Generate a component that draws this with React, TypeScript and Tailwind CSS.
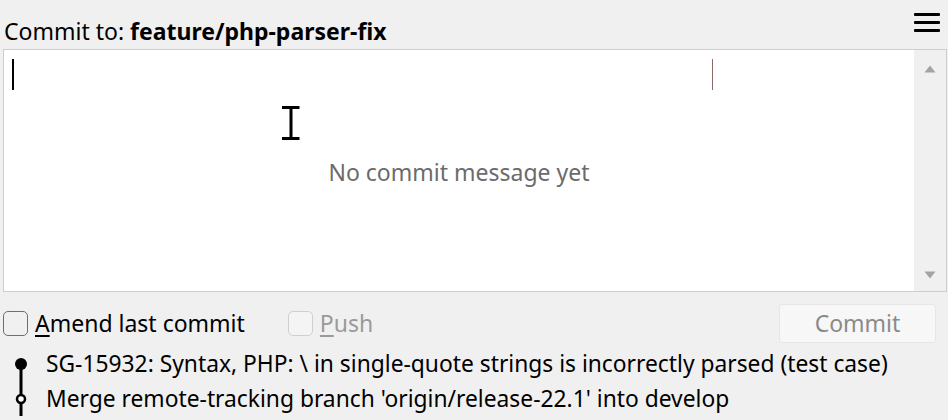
import React from 'react';

const font = { fontFamily: '"Noto Sans", "Open Sans", sans-serif' };

function Hamburger() {
  return (
    <svg width="26" height="20" viewBox="0 0 26 20" className="block">
      <rect x="0" y="1" width="26" height="3" rx="1" fill="#000" />
      <rect x="0" y="9" width="26" height="3" rx="1" fill="#000" />
      <rect x="0" y="17" width="26" height="3" rx="1" fill="#000" />
    </svg>
  );
}

function Checkbox({ disabled }: { disabled?: boolean }) {
  return (
    <span
      className={
        'inline-block w-[25px] h-[25px] rounded-[5px] border-[1.5px] ' +
        (disabled ? 'border-[#cfcfcf] bg-[#f4f4f4]' : 'border-[#6e6e6e] bg-[#f0f0f0]')
      }
    />
  );
}

const commits = [
  { text: "SG-15932: Syntax, PHP: \\ in single-quote strings is incorrectly parsed (test case)", head: true },
  { text: "Merge remote-tracking branch 'origin/release-22.1' into develop", head: false },
];

export default function App() {
  return (
    <div className="w-[948px] h-[420px] bg-[#f0f0f0] overflow-hidden flex flex-col text-black" style={font}>
      {/* Header */}
      <div className="h-[49px] flex items-end justify-between pl-[4px] pr-[8px] pb-[3px]">
        <div className="text-[23px] leading-[30px]">
          Commit to: <span className="font-bold">feature/php-parser-fix</span>
        </div>
        <div className="self-start mt-[12px]">
          <Hamburger />
        </div>
      </div>

      {/* Message box */}
      <div className="ml-[3px] mr-[1px] h-[243px] border border-[#cdcdcd] bg-white flex">
        <div className="flex-1 relative flex items-center justify-center">
          <div className="absolute left-[8px] top-[9px] w-[2px] h-[31px] bg-black" />
          <div className="absolute left-[708px] top-[9px] w-px h-[31px] bg-[#8a6a6a]" />
          {/* mouse I-beam */}
          <svg className="absolute left-[277px] top-[56px]" width="20" height="34" viewBox="0 0 20 34">
            <path d="M1 1.5h5.5M13 1.5h5.5M1 32.5h5.5M13 32.5h5.5M6 1.5h7M6 32.5h7" stroke="#000" strokeWidth="3" />
            <rect x="8.5" y="2" width="3" height="30" fill="#000" />
          </svg>
          <span className="text-[23px] text-[#6b6b6b] mt-[3px]">No commit message yet</span>
        </div>
        <div className="w-[32px] bg-[#f0f0f0] flex flex-col items-center justify-between pt-[15px] pb-[12px]">
          <svg width="12" height="8" viewBox="0 0 12 8">
            <path d="M6 0.5L11.5 7.5H0.5Z" fill="#a3a3a3" />
          </svg>
          <svg width="12" height="8" viewBox="0 0 12 8">
            <path d="M0.5 0.5H11.5L6 7.5Z" fill="#a3a3a3" />
          </svg>
        </div>
      </div>

      {/* Options row */}
      <div className="h-[54px] pt-[8px] flex items-center pl-[3px] pr-[12px]">
        <label className="flex items-center gap-[7px]">
          <Checkbox />
          <span className="text-[23px] leading-[30px]">
            <span className="underline underline-offset-[3px]">A</span>mend last commit
          </span>
        </label>
        <label className="flex items-center gap-[7px] ml-[43px]">
          <Checkbox disabled />
          <span className="text-[23px] leading-[30px] text-[#9a9a9a]">
            <span className="underline underline-offset-[3px]">P</span>ush
          </span>
        </label>
        <button className="ml-auto w-[157px] h-[39px] rounded-[3px] border border-[#e6e6e6] bg-[#f7f7f7] text-[23px] leading-[30px] text-[#8a8a8a]">
          Commit
        </button>
      </div>

      {/* Log */}
      <div className="flex flex-col">
        {commits.map((c, i) => (
          <div key={i} className="h-[35px] flex items-center">
            <svg className="ml-[13px] shrink-0" width="16" height="35" viewBox="0 0 16 35">
              {c.head ? (
                <>
                  <line x1="8" y1="18" x2="8" y2="35" stroke="#000" strokeWidth="3" />
                  <circle cx="8" cy="18" r="6" fill="#000" />
                </>
              ) : (
                <>
                  <line x1="8" y1="0" x2="8" y2="35" stroke="#000" strokeWidth="3" />
                  <circle cx="8" cy="18" r="4" fill="#fff" stroke="#000" strokeWidth="2.5" />
                </>
              )}
            </svg>
            <span className="ml-[17px] text-[22.8px] leading-[30px] whitespace-nowrap">{c.text}</span>
          </div>
        ))}
      </div>
    </div>
  );
}
